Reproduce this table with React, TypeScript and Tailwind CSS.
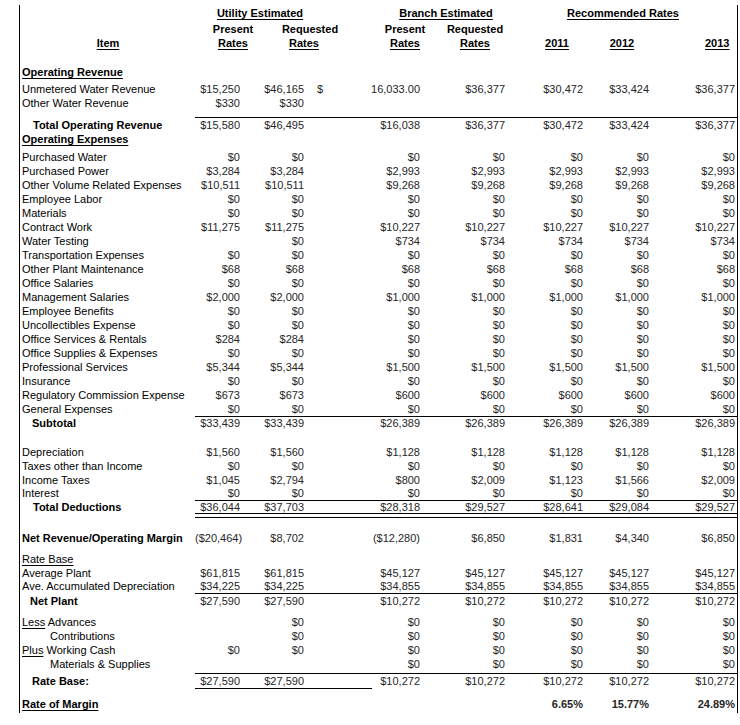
import type { ReactNode } from 'react';

const grid = 'grid grid-cols-[175px_45px_64px_116px_85px_78px_66px_88px]';
const std = 'h-[14px] leading-[14px]';

type RowProps = {
  label?: ReactNode;
  values?: ReactNode[];
  labelClass?: string;
  valueClass?: string;
  h?: string;
};

function Row({ label, values = [], labelClass = 'pl-[2px]', valueClass = '', h = std }: RowProps) {
  return (
    <div className={`${grid} ${h}`}>
      <div className={`whitespace-nowrap text-black ${labelClass}`}>{label}</div>
      {[0, 1, 2, 3, 4, 5, 6].map((i) => (
        <div
          key={i}
          className={`whitespace-nowrap text-right text-[#262626] ${i === 6 ? 'pr-[2px]' : ''} ${valueClass}`}
        >
          {values[i] ?? ''}
        </div>
      ))}
    </div>
  );
}

function Rule() {
  return (
    <div className={grid}>
      <div />
      <div className="col-span-7 h-px bg-black" />
    </div>
  );
}

const zeros = ['$0', '$0', '$0', '$0', '$0', '$0', '$0'];
const rep = (a: string, b: string, c: string) => [a, b, c, c, c, c, c];

const expenses: [string, ReactNode[]][] = [
  ['Purchased Water', zeros],
  ['Purchased Power', rep('$3,284', '$3,284', '$2,993')],
  ['Other Volume Related Expenses', rep('$10,511', '$10,511', '$9,268')],
  ['Employee Labor', zeros],
  ['Materials', zeros],
  ['Contract Work', rep('$11,275', '$11,275', '$10,227')],
  ['Water Testing', rep('', '$0', '$734')],
  ['Transportation Expenses', zeros],
  ['Other Plant Maintenance', rep('$68', '$68', '$68')],
  ['Office Salaries', zeros],
  ['Management Salaries', rep('$2,000', '$2,000', '$1,000')],
  ['Employee Benefits', zeros],
  ['Uncollectibles Expense', zeros],
  ['Office Services & Rentals', rep('$284', '$284', '$0')],
  ['Office Supplies & Expenses', zeros],
  ['Professional Services', rep('$5,344', '$5,344', '$1,500')],
  ['Insurance', zeros],
  ['Regulatory Commission Expense', rep('$673', '$673', '$600')],
  ['General Expenses', zeros],
];

export default function App() {
  return (
    <div className="min-h-[725px] bg-white pt-[5px] font-['Liberation_Sans',Arial,sans-serif] text-[11px]">
      <div className="ml-[19px] w-[719px] border-x border-black pb-[2px]">
        {/* column headers */}
        <div className="flex h-[17px] items-center font-bold text-black">
          <div className="w-[180px]" />
          <div className="w-[120px] text-center">
            <span className="underline underline-offset-2">Utility Estimated</span>
          </div>
          <div className="w-[66px]" />
          <div className="w-[120px] text-center">
            <span className="underline underline-offset-2">Branch Estimated</span>
          </div>
          <div className="w-[57px]" />
          <div className="w-[120px] text-center">
            <span className="underline underline-offset-2">Recommended Rates</span>
          </div>
        </div>
        <div className={`flex ${std} font-bold text-black`}>
          <div className="w-[178px]" />
          <div className="w-[70px] text-center">Present</div>
          <div className="w-[84px] text-center">Requested</div>
          <div className="w-[18px]" />
          <div className="w-[70px] text-center">Present</div>
          <div className="w-[70px] text-center">Requested</div>
        </div>
        <div className={`flex ${std} font-bold text-black`}>
          <div className="w-[58px]" />
          <div className="w-[60px] text-center underline underline-offset-2">Item</div>
          <div className="w-[60px]" />
          <div className="w-[70px] text-center">
            <span className="underline underline-offset-2">Rates</span>
          </div>
          <div className="w-[72px] text-center">
            <span className="underline underline-offset-2">Rates</span>
          </div>
          <div className="w-[30px]" />
          <div className="w-[70px] text-center">
            <span className="underline underline-offset-2">Rates</span>
          </div>
          <div className="w-[70px] text-center">
            <span className="underline underline-offset-2">Rates</span>
          </div>
          <div className="w-[17px]" />
          <div className="w-[60px] text-center">
            <span className="underline underline-offset-2">2011</span>
          </div>
          <div className="w-[70px] text-center">
            <span className="underline underline-offset-2">2012</span>
          </div>
          <div className="w-[48px]" />
          <div className="underline underline-offset-2">2013</div>
        </div>

        <div className="h-[15px]" />
        <Row label="Operating Revenue" labelClass="pl-[2px] font-bold underline underline-offset-2" />
        <div className="h-[3px]" />
        <Row
          label="Unmetered Water Revenue"
          values={[
            '$15,250',
            '$46,165',
            <div className="flex justify-between pl-[13px]">
              <span>$</span>
              <span>16,033.00</span>
            </div>,
            '$36,377',
            '$30,472',
            '$33,424',
            '$36,377',
          ]}
        />
        <Row label="Other Water Revenue" values={['$330', '$330']} />
        <div className="h-[7px]" />
        <Rule />
        <Row
          label="Total Operating Revenue"
          labelClass="pl-[13px] font-bold"
          values={['$15,580', '$46,495', '$16,038', '$36,377', '$30,472', '$33,424', '$36,377']}
        />
        <Row label="Operating Expenses" labelClass="pl-[2px] font-bold underline underline-offset-2" />
        <div className="h-[4px]" />
        {expenses.map(([label, values]) => (
          <Row key={label} label={label} values={values} />
        ))}
        <Rule />
        <Row
          label="Subtotal"
          labelClass="pl-[12px] font-bold"
          h="h-[13px] leading-[13px]"
          values={rep('$33,439', '$33,439', '$26,389')}
        />

        <div className="h-[15px]" />
        <Row label="Depreciation" values={rep('$1,560', '$1,560', '$1,128')} />
        <Row label="Taxes other than Income" values={zeros} />
        <Row
          label="Income Taxes"
          values={['$1,045', '$2,794', '$800', '$2,009', '$1,123', '$1,566', '$2,009']}
        />
        <Row label="Interest" values={zeros} h="h-[13px] leading-[13px]" />
        <Rule />
        <Row
          label="Total Deductions"
          labelClass="pl-[13px] font-bold"
          h="h-[12px] leading-[12px]"
          values={['$36,044', '$37,703', '$28,318', '$29,527', '$28,641', '$29,084', '$29,527']}
        />
        <Rule />
        <div className="h-[3px]" />
        <Rule />

        <div className="h-[13px]" />
        <Row
          label="Net Revenue/Operating Margin"
          labelClass="pl-[2px] font-bold"
          values={['($20,464)', '$8,702', '($12,280)', '$6,850', '$1,831', '$4,340', '$6,850']}
        />
        <div className="h-[7px]" />
        <Row label="Rate Base" labelClass="pl-[2px] underline underline-offset-2" />
        <Row label="Average Plant" values={rep('$61,815', '$61,815', '$45,127')} />
        <Row
          label="Ave. Accumulated Depreciation"
          h="h-[13px] leading-[13px]"
          values={rep('$34,225', '$34,225', '$34,855')}
        />
        <Rule />
        <Row
          label="Net Plant"
          labelClass="pl-[10px] font-bold"
          values={rep('$27,590', '$27,590', '$10,272')}
        />

        <div className="h-[7px]" />
        <Row
          label={
            <>
              <span className="underline underline-offset-2">Less</span> Advances
            </>
          }
          values={rep('', '$0', '$0')}
        />
        <Row label="Contributions" labelClass="pl-[30px]" values={rep('', '$0', '$0')} />
        <Row
          label={
            <>
              <span className="underline underline-offset-2">Plus</span> Working Cash
            </>
          }
          values={zeros}
        />
        <Row
          label="Materials & Supplies"
          labelClass="pl-[30px]"
          values={['', '', '$0', '$0', '$0', '$0', '$0']}
        />
        <div className="h-[2px]" />
        <Rule />
        <Row
          label="Rate Base:"
          labelClass="pl-[12px] font-bold"
          values={rep('$27,590', '$27,590', '$10,272')}
        />
        <div className="flex">
          <div className="w-[175px]" />
          <div className="h-px w-[177px] bg-black" />
        </div>
        <div className="h-[8px]" />
        <Row
          label="Rate of Margin"
          labelClass="pl-[2px] font-bold underline underline-offset-2"
          valueClass="font-bold"
          values={['', '', '', '', '6.65%', '15.77%', '24.89%']}
        />
      </div>
    </div>
  );
}
